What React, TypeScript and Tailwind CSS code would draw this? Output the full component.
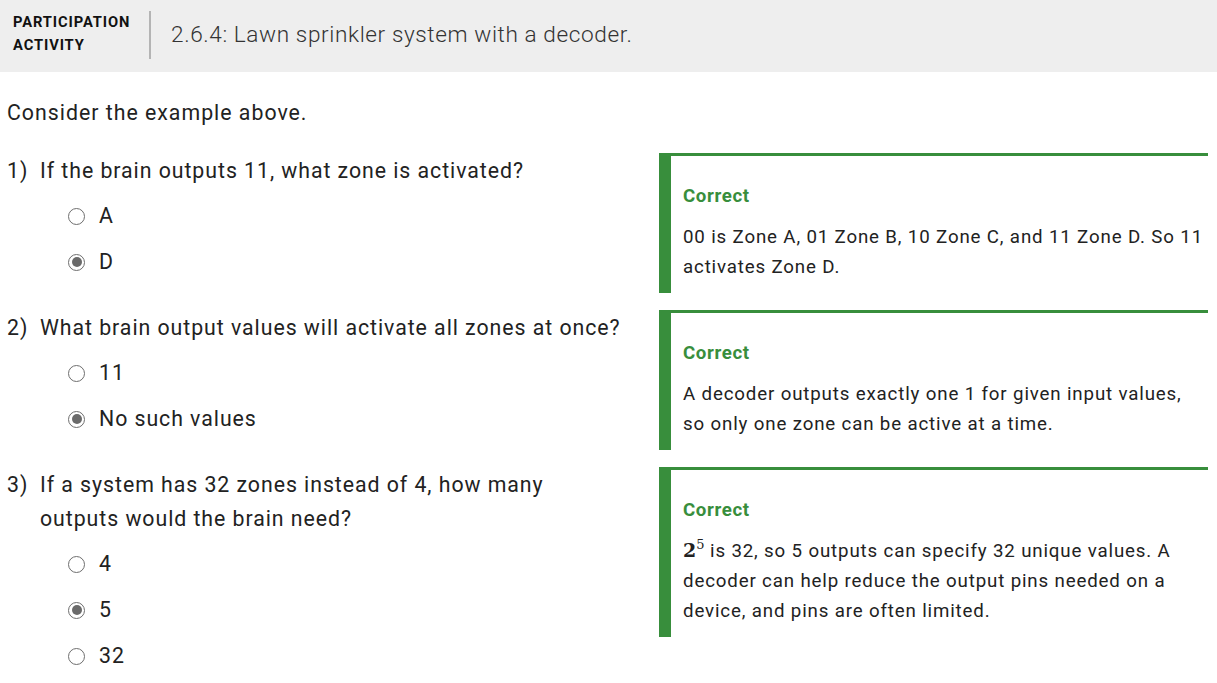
import { ReactNode } from "react";

type Option = { label: string; checked?: boolean };

type Question = {
  num: string;
  text: ReactNode;
  options: Option[];
  feedback: ReactNode;
};

function Radio({ checked }: { checked?: boolean }) {
  return (
    <span className="w-[17px] h-[17px] rounded-full border-[1.5px] border-[#6e6e6e] flex items-center justify-center shrink-0">
      {checked && <span className="w-[10px] h-[10px] rounded-full bg-[#6a6a6a]" />}
    </span>
  );
}

const questions: Question[] = [
  {
    num: "1)",
    text: "If the brain outputs 11, what zone is activated?",
    options: [{ label: "A" }, { label: "D", checked: true }],
    feedback: "00 is Zone A, 01 Zone B, 10 Zone C, and 11 Zone D. So 11 activates Zone D.",
  },
  {
    num: "2)",
    text: "What brain output values will activate all zones at once?",
    options: [{ label: "11" }, { label: "No such values", checked: true }],
    feedback:
      "A decoder outputs exactly one 1 for given input values, so only one zone can be active at a time.",
  },
  {
    num: "3)",
    text: "If a system has 32 zones instead of 4, how many outputs would the brain need?",
    options: [{ label: "4" }, { label: "5", checked: true }, { label: "32" }],
    feedback: (
      <>
        <span className="font-['DejaVu_Serif',serif] font-bold text-[19px] leading-none tracking-normal">
          2<span className="relative -top-[8px] text-[13px] font-normal">5</span>
        </span>{" "}
        is 32, so 5 outputs can specify 32 unique values. A decoder can help reduce the output pins
        needed on a device, and pins are often limited.
      </>
    ),
  },
];

export default function App() {
  return (
    <div className="w-[1217px] h-[683px] overflow-hidden bg-white text-[#222] font-['Roboto','Liberation_Sans',sans-serif]">
      <header className="h-[72px] bg-[#eeeeee] flex items-center">
        <div className="pl-[13px] w-[137px] text-[14.7px] leading-[23px] font-bold tracking-[0.9px] text-[#111] -mt-[4px]">
          <div>PARTICIPATION</div>
          <div>ACTIVITY</div>
        </div>
        <div className="ml-[12px] w-[2px] h-[48px] bg-[#b4b4b4] -mt-[2px]" />
        <h1 className="pl-[20px] text-[22.6px] font-light tracking-[0.6px] text-[#333] -mt-[3px]">
          2.6.4: Lawn sprinkler system with a decoder.
        </h1>
      </header>

      <p className="pl-[7px] mt-[26px] text-[21.3px] leading-[30px] tracking-[1px]">
        Consider the example above.
      </p>

      <div className="mt-[25px] flex flex-col gap-[17px]">
        {questions.map((q) => (
          <div key={q.num} className="flex">
            <div className="w-[659px] shrink-0 pl-[7px] pt-[1px]">
              <div className="flex text-[21.3px] leading-[34px] tracking-[0.95px]">
                <span className="w-[33px] shrink-0">{q.num}</span>
                <span className="pr-[35px]">{q.text}</span>
              </div>
              <div className="mt-[5px] pl-[61px]">
                {q.options.map((o) => (
                  <div
                    key={o.label}
                    className="h-[46px] flex items-center gap-[14px] text-[21.3px] tracking-[0.95px]"
                  >
                    <Radio checked={o.checked} />
                    <span>{o.label}</span>
                  </div>
                ))}
              </div>
            </div>
            <div className="w-[549px] self-start border-t-[3px] border-l-[12px] border-[#388e3c] pl-[12px] pr-[2px] pt-[25px] pb-[11px]">
              <div className="text-[18.7px] leading-[30px] font-bold tracking-[0.6px] text-[#388e3c]">
                Correct
              </div>
              <div className="mt-[11px] text-[18.7px] leading-[30px] tracking-[0.85px] text-[#222]">
                {q.feedback}
              </div>
            </div>
          </div>
        ))}
      </div>
    </div>
  );
}
